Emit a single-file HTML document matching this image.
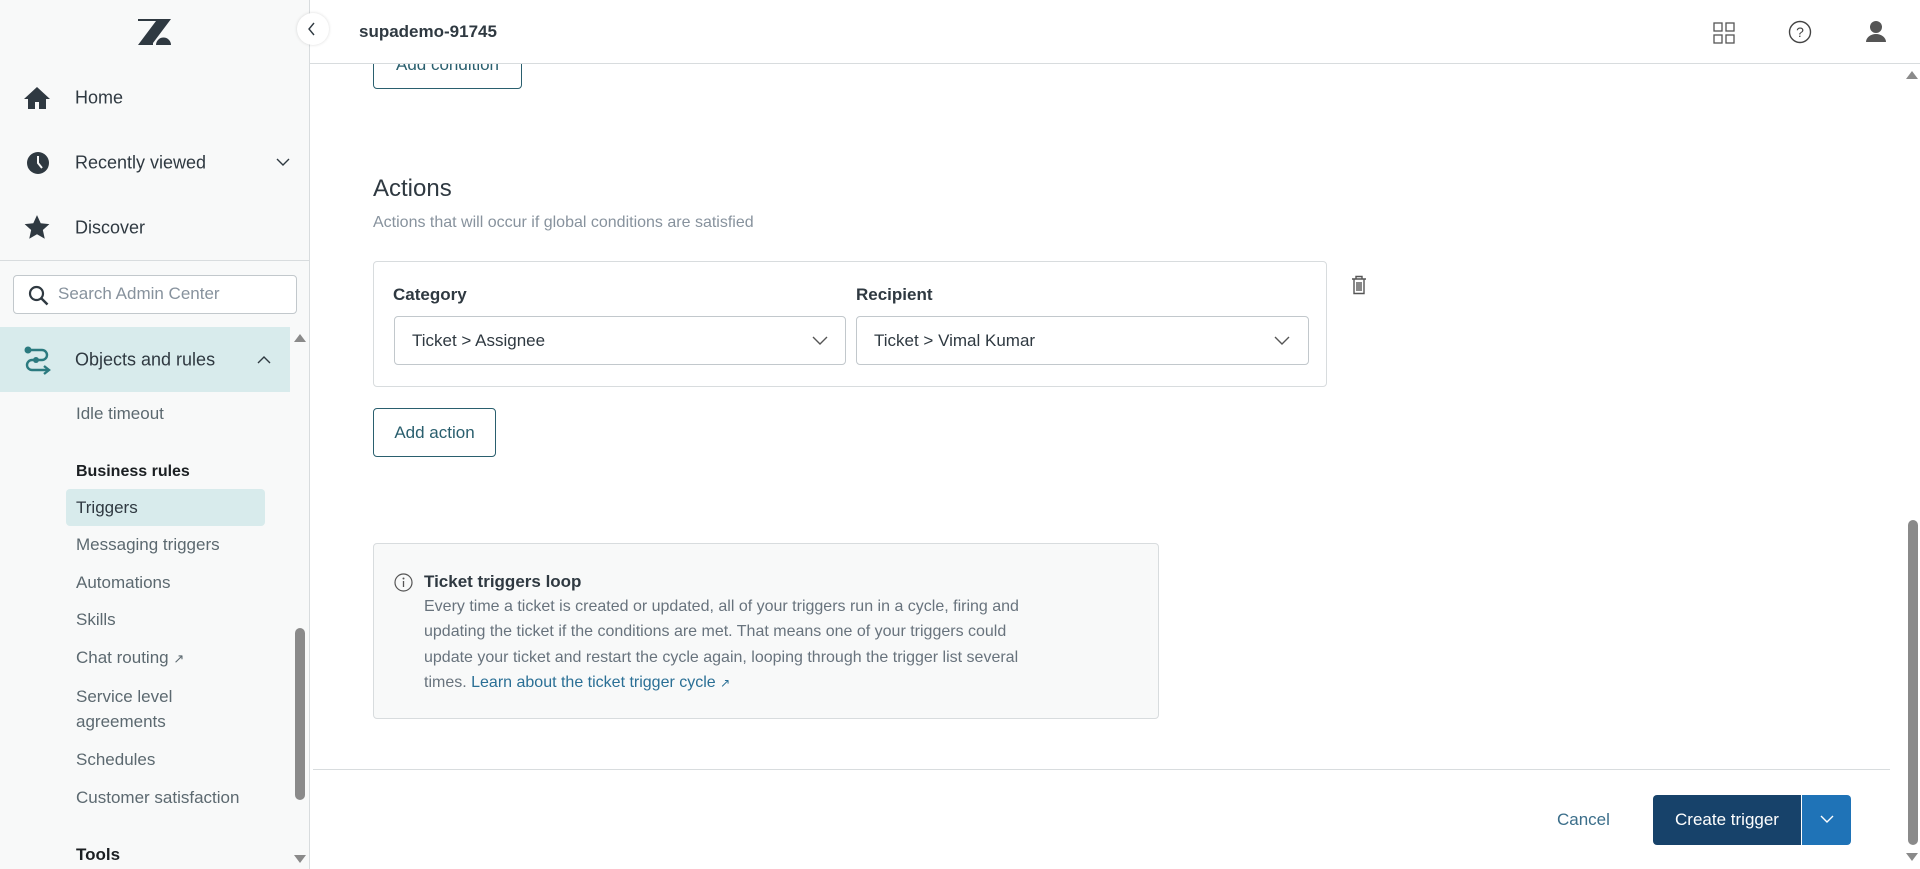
<!DOCTYPE html>
<html><head><meta charset="utf-8"><style>
*{box-sizing:border-box;margin:0;padding:0}
body{width:1920px;height:869px;overflow:hidden;background:#fff;font-family:"Liberation Sans",sans-serif;color:#2f3941;position:relative}
.abs{position:absolute}
.side{left:0;top:0;width:310px;height:869px;background:#f8f9f9;border-right:1px solid #d8dcde;z-index:3}
.z{z-index:4}
.nav{position:absolute;left:75px;font-size:18px;color:#2f3941;transform:translateY(-50%);z-index:4}
.sub{position:absolute;left:76px;font-size:17px;color:#5c6970;transform:translateY(-50%);white-space:nowrap;z-index:4}
.t{white-space:nowrap}
.btn{position:absolute;border:1px solid #2a5f6e;border-radius:4px;color:#2a5f6e;font-size:17px;display:flex;align-items:center;justify-content:center;background:#fff}
.sel{position:absolute;border:1px solid #c2c8cc;border-radius:4px;height:49px;font-size:17px;display:flex;align-items:center;padding-left:17px;color:#2f3941}
.info p{position:absolute;left:424px;font-size:16px;color:#68737d;white-space:nowrap;transform:translateY(-50%)}
</style></head><body>
<div class="abs side"></div>
<svg class="abs z" style="left:138px;top:19px" width="33" height="26" viewBox="0 0 33 26"><path d="M0 0h33L15 24V26H0L18 2H0z" fill="#2f3941"/><path d="M18 26a7.5 7.5 0 0 1 15 0z" fill="#2f3941"/></svg>
<div class="abs" style="left:297px;top:13px;width:32px;height:32px;border-radius:50%;background:#fff;box-shadow:0 0 3px rgba(0,0,0,.15);z-index:6"></div>
<svg class="abs" style="left:306px;top:21px;z-index:7" width="12" height="16"><path d="M8 2 3 8l5 6" stroke="#2f3941" stroke-width="1.4" fill="none"/></svg>
<svg class="abs z" style="left:23px;top:86px" width="28" height="24" viewBox="0 0 28 24"><path d="M14 1 1 13h4v10h7v-7h4v7h7V13h4z" fill="#2f3941"/></svg>
<div class="nav" style="top:98px">Home</div>
<svg class="abs z" style="left:26px;top:151px" width="24" height="24" viewBox="0 0 24 24"><circle cx="12" cy="12" r="11" fill="#2f3941"/><path d="M12 5v7l4 5" stroke="#f8f9f9" stroke-width="2" fill="none"/></svg>
<div class="nav" style="top:163px">Recently viewed</div>
<svg class="abs z" style="left:276px;top:157px" width="14" height="10"><path d="M1 2l6 6 6-6" stroke="#2f3941" stroke-width="1.4" fill="none"/></svg>
<svg class="abs z" style="left:23px;top:214px" width="28" height="27" viewBox="0 0 24 24"><path d="M12 1l3.3 7.2 7.7.8-5.8 5.2 1.7 7.8L12 18l-6.9 4 1.7-7.8L1 9l7.7-.8z" fill="#2f3941"/></svg>
<div class="nav" style="top:228px">Discover</div>
<div class="abs z" style="left:0;top:260px;width:309px;height:1px;background:#d8dcde"></div>
<div class="abs z" style="left:13px;top:275px;width:284px;height:39px;border:1px solid #c2c8cc;border-radius:4px;background:#fff"></div>
<svg class="abs z" style="left:28px;top:285px" width="22" height="22" viewBox="0 0 22 22"><circle cx="8.5" cy="8.5" r="6.5" stroke="#2f3941" stroke-width="2.2" fill="none"/><path d="M13.5 13.5l6 6" stroke="#2f3941" stroke-width="2.5"/></svg>
<div class="abs t z" style="left:58px;top:284px;font-size:17px;color:#87929d">Search Admin Center</div>
<div class="abs z" style="left:0;top:327px;width:290px;height:65px;background:#d8ebec"></div>
<svg class="abs z" style="left:22px;top:344px" width="30" height="32" viewBox="0 0 30 32"><g stroke="#2b7a7f" stroke-width="2.4" fill="none"><path d="M6 6h14a5 5 0 0 1 0 10H10a5 5 0 0 0 0 10h16"/><path d="M22 22l5 4-5 4"/></g><circle cx="6" cy="6" r="3.5" fill="#2b7a7f"/><circle cx="14" cy="16" r="3" fill="#2b7a7f"/></svg>
<div class="nav" style="top:360px">Objects and rules</div>
<svg class="abs z" style="left:257px;top:355px" width="14" height="10"><path d="M1 8l6-6 6 6" stroke="#2f3941" stroke-width="1.4" fill="none"/></svg>
<svg class="abs z" style="left:293px;top:333px" width="14" height="10"><path d="M1 9 7 1l6 8z" fill="#8a8a8a"/></svg>
<svg class="abs z" style="left:293px;top:854px" width="14" height="10"><path d="M1 1h12L7 9z" fill="#8a8a8a"/></svg>
<div class="abs z" style="left:295px;top:628px;width:10px;height:172px;border-radius:5px;background:#8a8a8a"></div>
<div class="sub" style="top:414px">Idle timeout</div>
<div class="sub" style="top:472px;color:#1b1f22;font-weight:bold;font-size:16px">Business rules</div>
<div class="abs z" style="left:66px;top:489px;width:199px;height:37px;border-radius:4px;background:#d8ebec"></div>
<div class="sub" style="top:508px;color:#2f3941">Triggers</div>
<div class="sub" style="top:545px">Messaging triggers</div>
<div class="sub" style="top:583px">Automations</div>
<div class="sub" style="top:620px">Skills</div>
<div class="sub" style="top:658px">Chat routing <span style="font-size:13px">&#x2197;&#xFE0E;</span></div>
<div class="sub" style="top:697px">Service level</div>
<div class="sub" style="top:722px">agreements</div>
<div class="sub" style="top:760px">Schedules</div>
<div class="sub" style="top:798px">Customer satisfaction</div>
<div class="sub" style="top:855px;color:#1b1f22;font-weight:bold;font-size:17px">Tools</div>
<!-- content behind header -->
<div class="btn" style="left:373px;top:40px;width:149px;height:49px"><span>Add condition</span></div>
<!-- header -->
<div class="abs" style="left:310px;top:0;width:1610px;height:64px;background:#fff;border-bottom:1px solid #d8dcde;z-index:2"></div>
<div class="abs t" style="left:359px;top:22px;font-size:17px;font-weight:bold;color:#2f3941;z-index:5">supademo-91745</div>
<svg class="abs" style="left:1713px;top:22px;z-index:5" width="22" height="22"><g stroke="#555" stroke-width="1.3" fill="none"><rect x="1" y="1" width="8" height="8"/><rect x="13" y="1" width="8" height="8"/><rect x="1" y="13" width="8" height="8"/><rect x="13" y="13" width="8" height="8"/></g></svg>
<svg class="abs" style="left:1788px;top:20px;z-index:5" width="24" height="24"><circle cx="12" cy="12" r="10.5" stroke="#444" stroke-width="1.4" fill="none"/><text x="12" y="17" text-anchor="middle" font-size="14" font-family="Liberation Sans" fill="#444">?</text></svg>
<svg class="abs" style="left:1866px;top:20px;z-index:5" width="20" height="24"><circle cx="10" cy="7" r="6" fill="#555"/><path d="M0 22a10 8 0 0 1 20 0z" fill="#555"/></svg>
<svg class="abs" style="left:1905px;top:70px" width="14" height="10"><path d="M1 9 7 1l6 8z" fill="#8a8a8a"/></svg>
<div class="abs" style="left:1908px;top:520px;width:10px;height:325px;border-radius:5px;background:#8a8a8a"></div>
<svg class="abs" style="left:1905px;top:852px" width="14" height="10"><path d="M1 1h12L7 9z" fill="#8a8a8a"/></svg>
<div class="abs t" style="left:373px;top:175px;font-size:24px;color:#2f3941">Actions</div>
<div class="abs t" style="left:373px;top:214px;font-size:16px;color:#87929d">Actions that will occur if global conditions are satisfied</div>
<div class="abs" style="left:373px;top:261px;width:954px;height:126px;border:1px solid #d8dcde;border-radius:4px"></div>
<div class="abs t" style="left:393px;top:285px;font-size:17px;font-weight:bold;color:#2f3941">Category</div>
<div class="abs t" style="left:856px;top:285px;font-size:17px;font-weight:bold;color:#2f3941">Recipient</div>
<div class="sel" style="left:394px;top:316px;width:452px">Ticket &gt; Assignee</div>
<div class="sel" style="left:856px;top:316px;width:453px">Ticket &gt; Vimal Kumar</div>
<svg class="abs" style="left:812px;top:336px" width="16" height="10"><path d="M1 1l7 7 7-7" stroke="#555" stroke-width="1.4" fill="none"/></svg>
<svg class="abs" style="left:1274px;top:336px" width="16" height="10"><path d="M1 1l7 7 7-7" stroke="#555" stroke-width="1.4" fill="none"/></svg>
<svg class="abs" style="left:1351px;top:275px" width="16" height="20" viewBox="0 0 16 20"><g stroke="#555" stroke-width="1.4" fill="none"><path d="M1 4h14M5 4V1.5h6V4M3 4v14.5h10V4M6 7v9M10 7v9M8 7v9"/></g></svg>
<div class="btn" style="left:373px;top:408px;width:123px;height:49px">Add action</div>
<div class="abs" style="left:373px;top:543px;width:786px;height:176px;border:1px solid #d8dcde;border-radius:4px;background:#f8f9f9"></div>
<svg class="abs" style="left:394px;top:573px" width="19" height="19"><circle cx="9.5" cy="9.5" r="8.5" stroke="#555" stroke-width="1.2" fill="none"/><path d="M9.5 8v6" stroke="#555" stroke-width="1.3"/><circle cx="9.5" cy="5.5" r="1" fill="#555"/></svg>
<div class="info">
<p style="top:582px;font-weight:bold;color:#2f3941;font-size:17px">Ticket triggers loop</p>
<p style="top:607px">Every time a ticket is created or updated, all of your triggers run in a cycle, firing and</p>
<p style="top:632px">updating the ticket if the conditions are met. That means one of your triggers could</p>
<p style="top:658px">update your ticket and restart the cycle again, looping through the trigger list several</p>
<p style="top:683px">times. <span style="color:#2a6f95">Learn about the ticket trigger cycle <span style="font-size:12px">&#x2197;&#xFE0E;</span></span></p>
</div>
<div class="abs" style="left:313px;top:769px;width:1577px;height:1px;background:#d8dcde"></div>
<div class="abs t" style="left:1557px;top:810px;font-size:17px;color:#3b6e8a">Cancel</div>
<div class="abs" style="left:1653px;top:795px;width:148px;height:50px;background:#17426a;border-radius:4px 0 0 4px;color:#fff;font-size:17px;display:flex;align-items:center;justify-content:center">Create trigger</div>
<div class="abs" style="left:1802px;top:795px;width:49px;height:50px;background:#1f73b7;border-radius:0 4px 4px 0"></div>
<svg class="abs" style="left:1820px;top:815px" width="14" height="9"><path d="M1 1l6 6 6-6" stroke="#fff" stroke-width="1.4" fill="none"/></svg>
</body></html>
